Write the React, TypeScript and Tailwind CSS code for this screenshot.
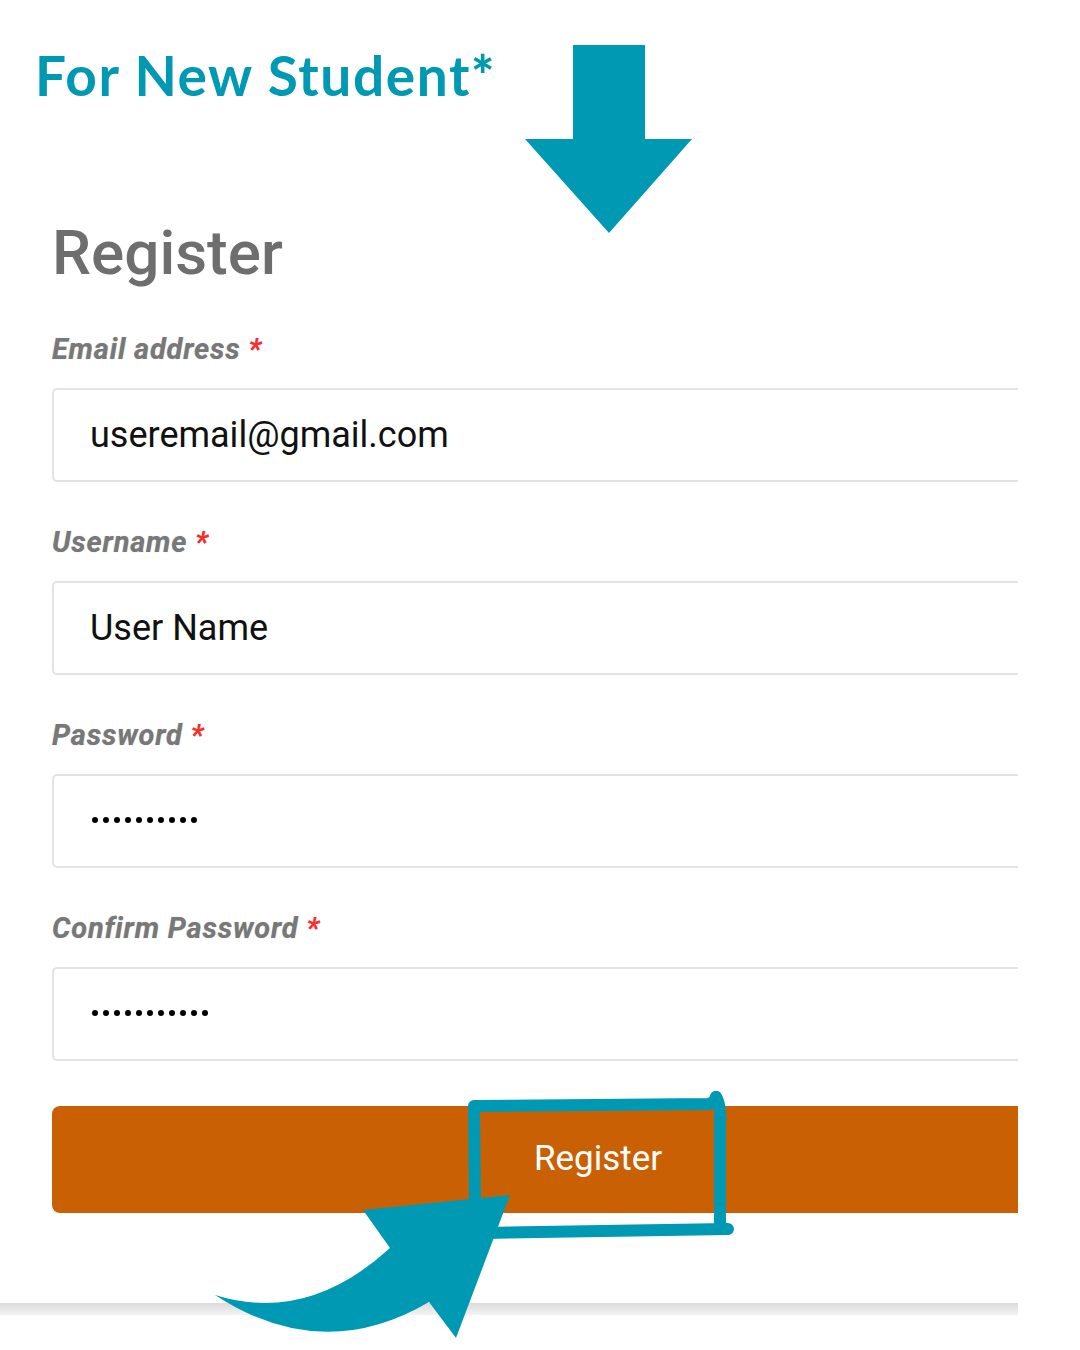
import React from "react";

const Field = ({
  label,
  first,
  children,
}: {
  label: string;
  first?: boolean;
  children: React.ReactNode;
}) => (
  <div className={first ? "mt-[48px]" : "mt-[43px]"}>
    <div className="h-[34px] text-[29px] leading-[34px] tracking-[0.8px] font-bold italic text-[#787878] [font-family:Roboto,'Liberation_Sans',sans-serif] [text-shadow:0_0_1px_rgba(120,120,120,0.6)]">
      {label} <span className="text-[#ff2b2b]">*</span>
    </div>
    <div className="mt-[22px] h-[94px] w-[1092px] border-2 border-[#e3e3e3] rounded-[5px] bg-white flex items-center px-[36px]">
      {children}
    </div>
  </div>
);

const Dots = ({ n }: { n: number }) => (
  <div className="flex gap-[5px] pl-[2px] -mt-[3px]">
    {Array.from({ length: n }).map((_, i) => (
      <div key={i} className="w-[6px] h-[6px] rounded-full bg-black" />
    ))}
  </div>
);

export default function App() {
  return (
    <div className="relative w-[1080px] h-[1350px] bg-white overflow-hidden">
      <div className="pt-[48px] pl-[35px]">
        <div className="text-[55px] leading-none font-bold tracking-[1.6px] text-[#0099b3] [font-family:Lato,'Open_Sans',sans-serif]">
          For New Student<span className="font-black">*</span>
        </div>
      </div>

      <div className="ml-[52px] w-[966px] overflow-hidden">
        <div className="mt-[119px] text-[62px] leading-none font-medium text-[#6e6e6e] [font-family:Roboto,'Liberation_Sans',sans-serif]">
          Register
        </div>

        <Field label="Email address" first>
          <span className="text-[36px] text-[#111] [font-family:Roboto,'Liberation_Sans',sans-serif]">
            useremail@gmail.com
          </span>
        </Field>
        <Field label="Username">
          <span className="text-[36px] text-[#111] [font-family:Roboto,'Liberation_Sans',sans-serif]">
            User Name
          </span>
        </Field>
        <Field label="Password">
          <Dots n={10} />
        </Field>
        <Field label="Confirm Password">
          <Dots n={11} />
        </Field>

        <div className="mt-[45px] h-[107px] w-[1092px] rounded-[8px] bg-[#c96104] flex items-center justify-center">
          <span className="text-[35px] text-white [font-family:Roboto,'Liberation_Sans',sans-serif]">
            Register
          </span>
        </div>
      </div>

      <div className="mt-[90px] w-[1018px] h-[12px] bg-gradient-to-b from-[#dcdcdc] to-[#f3f3f3]" />

      {/* annotation overlays */}
      <svg
        className="absolute left-0 top-0 pointer-events-none"
        width="1080"
        height="1350"
        viewBox="0 0 1080 1350"
      >
        <polygon
          points="573,45 645,45 645,139 692,139 609,233 525,139 573,139"
          fill="#0099b3"
        />
        <g
          fill="none"
          stroke="#0099b3"
          strokeWidth="12"
          strokeLinecap="round"
          strokeLinejoin="round"
        >
          <path d="M475 1205 L474 1106 L708 1104 Q715 1103 716 1097" />
          <path d="M716 1097 Q721 1104 720 1125 L720 1226" />
          <path d="M728 1229 L485 1233" />
        </g>
        <path
          d="M363 1210 L510 1195 L456 1338 L429 1302 Q322 1365 215 1295 Q307 1324 390 1248 Z"
          fill="#0099b3"
        />
      </svg>
    </div>
  );
}
